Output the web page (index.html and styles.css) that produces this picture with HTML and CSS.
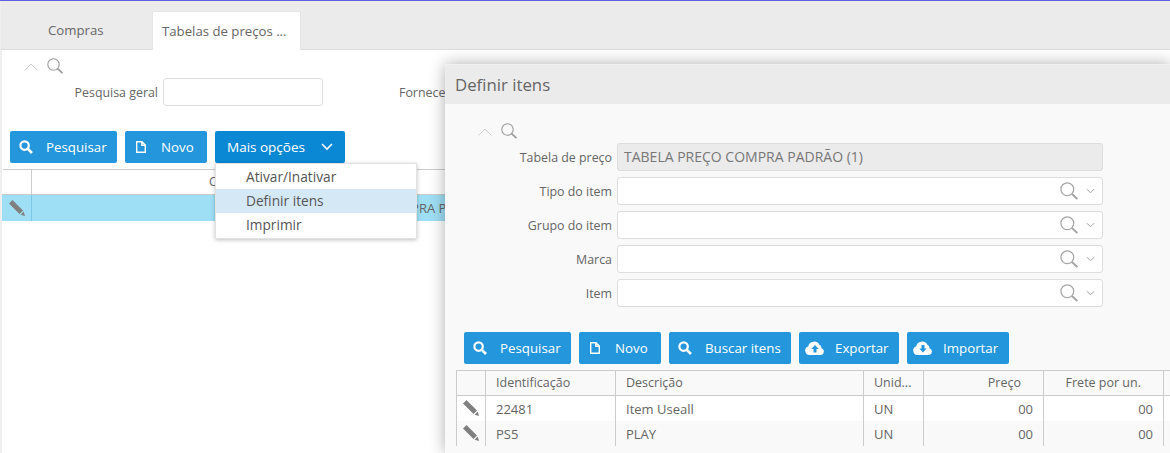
FILE: index.html
```html
<!DOCTYPE html>
<html lang="pt">
<head>
<meta charset="utf-8">
<title>Tabelas de preços</title>
<link rel="stylesheet" href="styles.css">
</head>
<body>
<svg class="defs" width="0" height="0" aria-hidden="true">
  <symbol id="lens" viewBox="0 0 16 16"><circle cx="6.500" cy="6.500" r="5.700" fill="none" stroke="currentColor" stroke-width="1.100"/><path d="M10.600 10.600 15.500 15.200" fill="none" stroke="currentColor" stroke-width="1.800"/></symbol>
  <symbol id="up" viewBox="0 0 14 8"><path d="M.5 7.500 7 1l6.500 6.500" fill="none" stroke="currentColor" stroke-width="1"/></symbol>
  <symbol id="down" viewBox="0 0 10 6"><path d="M1 1l4 4 4-4" fill="none" stroke="currentColor" stroke-width="1"/></symbol>
  <symbol id="more" viewBox="0 0 12 8"><path d="M1 1l5 5 5-5" fill="none" stroke="currentColor" stroke-width="1.600"/></symbol>
  <symbol id="pencil" viewBox="0 0 16 16"><path d="M3.500 0 0 3.500 10.500 14 14 10.500zM11.600 14.700 14.700 11.600 16 16z" fill="currentColor"/></symbol>
  <symbol id="search" viewBox="0 0 14 14"><circle cx="5.600" cy="5.600" r="4.200" fill="none" stroke="currentColor" stroke-width="2.200"/><path d="M8.800 8.800 13 13" fill="none" stroke="currentColor" stroke-width="2.600"/></symbol>
  <symbol id="file" viewBox="0 0 10 12"><path d="M.7.700H6L9.300 4V11.300H.7zM5.800.9V4.200H9.100" fill="none" stroke="currentColor" stroke-width="1.400"/></symbol>
  <symbol id="cloud-up" viewBox="0 0 20 14"><path fill="currentColor" fill-rule="evenodd" d="M4.500 14A4.300 4.300 0 0 1 3.200 5.600 6 6 0 0 1 14.400 3.700 3.600 3.600 0 0 1 16.500 7.200 3.500 3.500 0 0 1 16 14zM10 4 6.300 8H8.500V11.500H11.500V8H13.700z"/></symbol>
  <symbol id="cloud-down" viewBox="0 0 20 14"><path fill="currentColor" fill-rule="evenodd" d="M4.500 14A4.300 4.300 0 0 1 3.200 5.600 6 6 0 0 1 14.400 3.700 3.600 3.600 0 0 1 16.500 7.200 3.500 3.500 0 0 1 16 14zM8.500 4V7.500H6.300L10 11.500 13.700 7.500H11.500V4z"/></symbol>
</svg>

<div class="page">
  <nav class="tabs">
    <a class="tab">Compras</a>
    <a class="tab tab-active">Tabelas de preços ...</a>
  </nav>

  <section class="filter">
    <div class="toggle">
      <svg class="ico-up"><use href="#up"/></svg>
      <svg class="ico-lens"><use href="#lens"/></svg>
    </div>
    <div class="filter-row">
      <label class="filter-label">Pesquisa geral</label>
      <input class="input filter-input" type="text">
      <label class="filter-label filter-second">Fornecedor</label>
    </div>
  </section>

  <div class="toolbar">
    <button class="btn btn-search"><svg class="btn-ico"><use href="#search"/></svg>Pesquisar</button>
    <button class="btn btn-new"><svg class="btn-ico-file"><use href="#file"/></svg>Novo</button>
    <div class="dropdown">
      <button class="btn btn-more">Mais opções<svg class="ico-more"><use href="#more"/></svg></button>
      <ul class="menu">
        <li class="menu-item">Ativar/Inativar</li>
        <li class="menu-item menu-item-on">Definir itens</li>
        <li class="menu-item">Imprimir</li>
      </ul>
    </div>
  </div>

  <table class="grid main-grid">
    <colgroup><col class="mc-1"><col></colgroup>
    <thead><tr><th></th><th class="main-head">Código</th></tr></thead>
    <tbody><tr class="row-selected"><td class="edit"><svg class="ico-pencil"><use href="#pencil"/></svg></td><td class="main-cell">TABELA PREÇO COMPRA PADRÃO</td></tr></tbody>
  </table>
</div>

<section class="modal">
  <h2 class="modal-title">Definir itens</h2>
  <div class="modal-body">
    <div class="toggle modal-toggle">
      <svg class="ico-up"><use href="#up"/></svg>
      <svg class="ico-lens"><use href="#lens"/></svg>
    </div>
    <div class="form">
      <label class="form-label">Tabela de preço</label>
      <div class="field field-off">TABELA PREÇO COMPRA PADRÃO (1)</div>
      <label class="form-label">Tipo do item</label>
      <div class="field"><svg class="field-lens"><use href="#lens"/></svg><svg class="field-down"><use href="#down"/></svg></div>
      <label class="form-label">Grupo do item</label>
      <div class="field"><svg class="field-lens"><use href="#lens"/></svg><svg class="field-down"><use href="#down"/></svg></div>
      <label class="form-label">Marca</label>
      <div class="field"><svg class="field-lens"><use href="#lens"/></svg><svg class="field-down"><use href="#down"/></svg></div>
      <label class="form-label">Item</label>
      <div class="field"><svg class="field-lens"><use href="#lens"/></svg><svg class="field-down"><use href="#down"/></svg></div>
    </div>
    <div class="toolbar modal-toolbar">
      <button class="btn btn-search"><svg class="btn-ico"><use href="#search"/></svg>Pesquisar</button>
      <button class="btn btn-new"><svg class="btn-ico-file"><use href="#file"/></svg>Novo</button>
      <button class="btn btn-find"><svg class="btn-ico"><use href="#search"/></svg>Buscar itens</button>
      <button class="btn btn-export"><svg class="btn-ico-cloud"><use href="#cloud-up"/></svg>Exportar</button>
      <button class="btn btn-import"><svg class="btn-ico-cloud"><use href="#cloud-down"/></svg>Importar</button>
    </div>
    <table class="grid items-grid">
      <colgroup><col class="c-edit"><col class="c-id"><col class="c-desc"><col class="c-unit"><col class="c-num"><col class="c-num"><col class="c-rest"></colgroup>
      <thead>
        <tr><th></th><th>Identificação</th><th>Descrição</th><th>Unid...</th><th class="num">Preço</th><th class="num">Frete por un.</th><th></th></tr>
      </thead>
      <tbody>
        <tr><td class="edit"><svg class="ico-pencil"><use href="#pencil"/></svg></td><td>22481</td><td>Item Useall</td><td>UN</td><td class="num">00</td><td class="num">00</td><td></td></tr>
        <tr class="row-alt"><td class="edit"><svg class="ico-pencil"><use href="#pencil"/></svg></td><td>PS5</td><td>PLAY</td><td>UN</td><td class="num">00</td><td class="num">00</td><td></td></tr>
      </tbody>
    </table>
  </div>
</section>
</body>
</html>
```
FILE: styles.css
```css
* { box-sizing: border-box; }
html, body { height: 100%; }
body {
  margin: 0;
  overflow: hidden;
  position: relative;
  background: #fff;
  border-top: 1px solid #5f5fe6;
  font: 13px/18px "Open Sans", "Noto Sans", sans-serif;
  color: #666;
}
.defs { position: absolute; }
svg { display: block; }

.page { height: 100%; border-left: 2px solid #efefef; }

.tabs {
  display: flex;
  align-items: flex-end;
  height: 49px;
  margin-left: -1px;
  background: #ebebeb;
  border-bottom: 1px solid #ddd;
}
.tab {
  display: block;
  width: 151px;
  height: 38px;
  padding: 10px 0 0 47px;
  color: #666;
  font-size: 13.200px;
}
.tab-active {
  width: 149px;
  height: 39px;
  margin-bottom: -1px;
  padding-left: 9px;
  background: #fff;
  border: 1px solid #e4e4e4;
  border-bottom: 0;
  border-radius: 2px 2px 0 0;
}

.filter { height: 81px; }
.toggle { display: flex; align-items: flex-start; padding: 8px 0 0 22px; color: #bbb; }
.ico-up { width: 14px; height: 8px; margin-top: 5px; color: #ccc; }
.ico-lens { width: 16px; height: 16px; margin-left: 9px; color: #9c9c9c; }
.filter-row { display: flex; align-items: center; height: 28px; margin-top: 4px; }
.filter-label { width: 156px; padding-top: 2px; text-align: right; font-size: 12.400px; }
.filter-second { width: 76px; margin-left: 0; text-align: left; white-space: nowrap; }
.input {
  height: 28px;
  background: #fff;
  border: 1px solid #ddd;
  border-radius: 3px;
}
.filter-input { width: 160px; margin: 0 76px 0 5px; }

.toolbar { display: flex; gap: 8px; padding-left: 8px; height: 32px; }
.btn {
  display: flex;
  align-items: center;
  height: 32px;
  padding: 0;
  border: 0;
  border-radius: 2px;
  background: #2496db;
  color: #fff;
  font: 13.300px/18px "Open Sans", "Noto Sans", sans-serif;
  white-space: nowrap;
}
.btn-search { width: 107px; }
.btn-new { width: 82px; }
.btn-find { width: 122px; }
.btn-export { width: 100px; }
.btn-import { width: 102px; }
.btn-more { width: 130px; padding-left: 12px; background: #0a88d4; font-size: 13.500px; }
.btn-ico { width: 14px; height: 14px; margin: 0 13px 0 9px; }
.btn-ico-file { width: 10px; height: 12px; margin: 0 15px 0 11px; }
.btn-ico-cloud { width: 20px; height: 14px; margin: 0 10px 0 6px; }
.ico-more { width: 12px; height: 8px; margin-left: 16px; }

.dropdown { position: relative; }
.menu {
  position: absolute;
  left: 0;
  top: 32px;
  z-index: 2;
  width: 202px;
  margin: 0;
  padding: 1px 0;
  list-style: none;
  background: #fff;
  border: 1px solid #e2e2e2;
  box-shadow: 0 1px 4px rgba(0, 0, 0, .25);
}
.menu-item { height: 24px; padding: 3px 0 0 30px; color: #555; font-size: 13.700px; line-height: 18px; }
.menu-item-on { background: #d5e8f6; }

.grid {
  border-collapse: collapse;
  table-layout: fixed;
  color: #666;
}
.grid th {
  height: 25px;
  padding: 0 10px;
  font-size: 12.500px;
  font-weight: 400;
  text-align: left;
  white-space: nowrap;
  overflow: hidden;
  border: 1px solid #ccc;
}
.grid td {
  height: 25px;
  padding: 1px 10px 0;
  white-space: nowrap;
  overflow: hidden;
  border-left: 1px solid #ccc;
  border-right: 1px solid #ccc;
}
.grid .edit { padding: 0 0 0 6px; }
.ico-pencil { width: 16px; height: 16px; color: #808080; }
.grid .num { text-align: right; }
.grid th.num { padding-right: 22px; }

.main-grid { width: 1168px; margin-top: 6px; }
.mc-1 { width: 29px; }
.grid .main-head { padding-left: 177px; border-right: 0; }
.row-selected td { height: 26px; background: #9fdff5; border-color: #9fdff5; }
.row-selected .edit { border-right-color: #7cc6e6; }
.grid .main-cell { padding-left: 255px; border: 0; }
.main-grid th:first-child { border-left: 0; }

.modal {
  position: absolute;
  left: 445px;
  top: 63px;
  right: 0;
  bottom: 0;
  z-index: 3;
  display: flex;
  flex-direction: column;
  background: #f9f9f9;
  border-top: 1px solid #f2f2f2;
  border-radius: 3px 0 0 0;
  box-shadow: 0 0 16px rgba(0, 0, 0, .32);
}
.modal-title {
  height: 39px;
  margin: 0;
  padding: 8px 0 0 10px;
  background: #ebebeb;
  font-size: 16.800px;
  line-height: 24px;
  font-weight: 400;
  color: #666;
  border-radius: 3px 0 0 0;
}
.modal-body { padding: 0 0 0 11px; }
.modal-toggle { padding: 19px 0 0 22px; height: 39px; }
.form {
  display: grid;
  grid-template-columns: 156px 486px;
  grid-auto-rows: 28px;
  row-gap: 6px;
  column-gap: 5px;
  align-items: center;
}
.form-label { padding-top: 1px; text-align: right; font-size: 12.400px; }
.field {
  display: flex;
  align-items: center;
  justify-content: flex-end;
  height: 28px;
  padding-right: 7px;
  background: #fff;
  border: 1px solid #ddd;
  border-radius: 3px;
}
.field-off {
  justify-content: flex-start;
  padding-left: 6px;
  background: #ebebeb;
  color: #777;
  font-size: 14px;
}
.field-lens { width: 18px; height: 18px; color: #a6a6a6; }
.field-down { width: 9px; height: 6px; margin-left: 8px; color: #999; }
.modal-toolbar { margin-top: 25px; padding-left: 8px; }

.items-grid { width: 716px; margin-top: 6px; }
.c-edit { width: 29px; }
.c-id { width: 130px; }
.c-desc { width: 248px; }
.c-unit { width: 60px; }
.c-num { width: 120px; }
.c-rest { width: 9px; }
.items-grid tbody tr:first-child td { background: #fff; }
.items-grid .row-alt td { background: #f9f9f9; }
.items-grid tbody td { height: 25px; }
```
